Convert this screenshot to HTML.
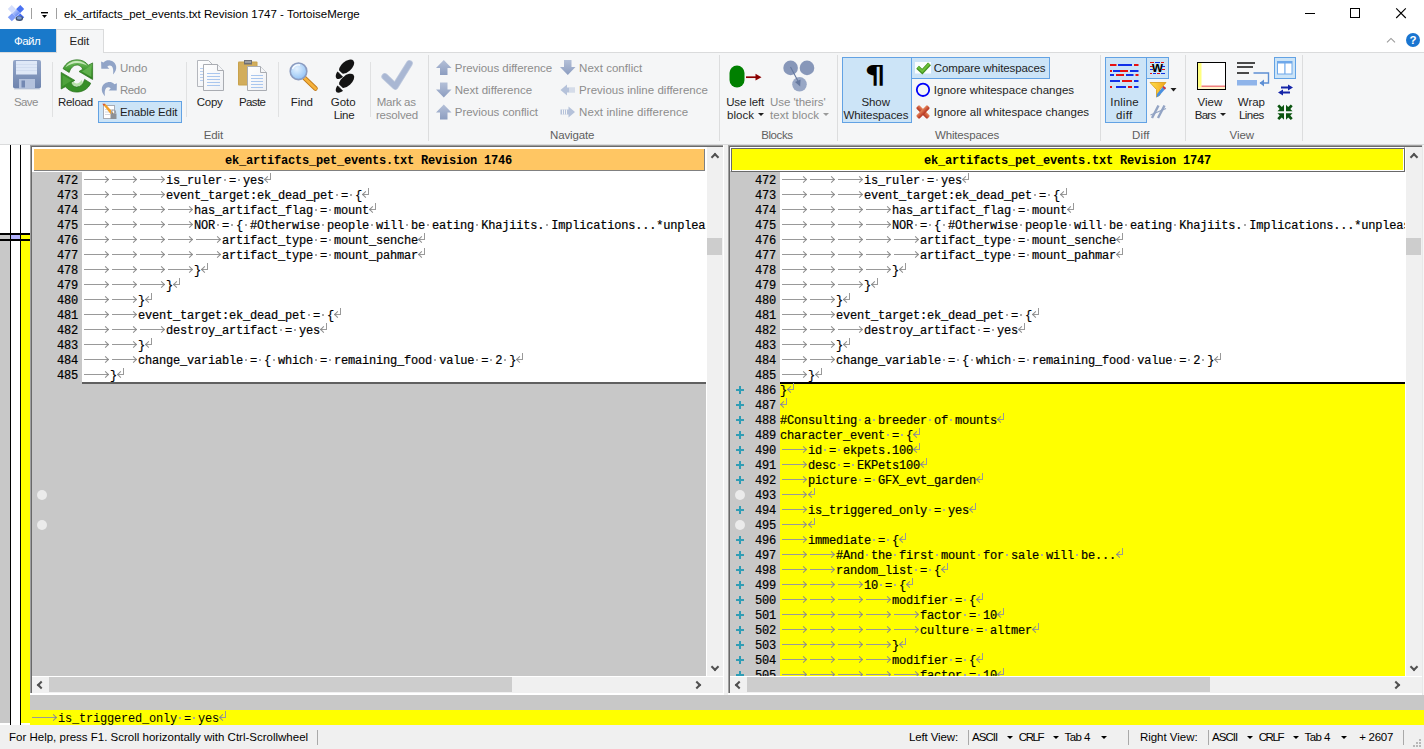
<!DOCTYPE html>
<html lang="en">
<head>
<meta charset="utf-8">
<title>ek_artifacts_pet_events.txt Revision 1747 - TortoiseMerge</title>
<style>
*,*:before,*:after{box-sizing:border-box;margin:0;padding:0}
html,body{width:1424px;height:749px;overflow:hidden;background:#fff}
body{position:relative;font-family:"Liberation Sans",sans-serif;font-size:12px;color:#1e1e1e}
.abs{position:absolute}
i{font-style:normal}
/* ---------- title bar ---------- */
#title{position:absolute;left:0;top:0;width:1424px;height:30px;background:#fff}
#title .txt{position:absolute;left:64px;top:6px;font-size:12px;line-height:16px;color:#000;white-space:nowrap;letter-spacing:-0.1px}
.tsep{position:absolute;top:8px;width:1px;height:11px;background:#a0a0a0}
/* ---------- tabs ---------- */
#tabfile{position:absolute;left:0;top:29px;width:56px;height:23px;background:#1979ca;color:#fff;text-align:center;line-height:23px;font-size:12px}
#tabedit{position:absolute;left:56px;top:29px;width:48px;height:24px;background:#f5f6f7;border:1px solid #dadbdc;border-bottom:none;text-align:center;line-height:22px;font-size:12px;color:#1e1e1e;z-index:2}
/* ---------- ribbon ---------- */
#ribbon{position:absolute;left:0;top:52px;width:1424px;height:93px;background:#f5f6f7;border-top:1px solid #dadbdc;border-bottom:1px solid #dadbdc}
#rb{position:absolute;left:0;top:0;width:0;height:0}
.dda{position:absolute;width:0;height:0;border-left:3px solid transparent;border-right:3px solid transparent;border-top:3px solid #1e1e1e}
.lt.g{color:#5f5f5f}
.lbl{position:absolute;white-space:nowrap;font-size:12px;line-height:13px;text-align:center;color:#1e1e1e;transform:translateX(-50%)}
.lt{position:absolute;white-space:nowrap;font-size:12px;line-height:15px;color:#1e1e1e}
.dis{color:#8d8d8d}
.glbl{position:absolute;top:76px;white-space:nowrap;font-size:12px;line-height:14px;color:#5f5f5f;transform:translateX(-50%)}
.vsep{position:absolute;top:62px;width:1px;height:55px;background:#e0e1e2}
.gsep{position:absolute;top:55px;width:1px;height:86px;background:#dcddde}
.hot{position:absolute;background:#cce4f7;border:1px solid #62a2e4}
/* ---------- locator ---------- */
#loc{position:absolute;left:0;top:145px;width:30px;height:580px;background:#fff}
/* ---------- panes ---------- */
.pane{position:absolute;top:145px;height:550px;background:#fff;overflow:hidden}
.pane .bt1{position:absolute;left:0;top:0;right:0;height:1px;background:#a0a0a0}
.pane .bt2{position:absolute;left:1px;top:1px;right:0;height:1px;background:#696969}
.pane .bl1{position:absolute;left:0;top:0;width:1px;bottom:2px;background:#a0a0a0}
.pane .bl2{position:absolute;left:1px;top:1px;width:1px;bottom:2px;background:#696969}
.hdr{position:absolute;left:2px;top:2px;height:25px;font-family:"Liberation Mono",monospace;font-weight:bold;font-size:12px;letter-spacing:-0.2px;line-height:25px;text-align:center;color:#000;white-space:pre;padding-right:2px}
.hdr.hl{border-top:2px solid #fff;border-left:2px solid #fff;border-top-color:#fff;border-right:1px solid #fff;border-bottom:1px solid #fff;box-shadow:inset -1px -1px 0 #808080}
.hdr.hr{padding-right:0;line-height:25px;padding-top:1px;border-top:1px solid #fff;border-left:1px solid #fff;border-right:1px solid #696969;border-bottom:1px solid #696969;box-shadow:inset 1px 1px 0 #696969,inset -1px -1px 0 #fff}
.code{position:absolute;left:2px;top:27px;height:504px;overflow:hidden;background:#c8c8c8}
.r{position:relative;height:15px;white-space:pre;font-family:"Liberation Mono",monospace;font-size:12px;letter-spacing:-0.2px;line-height:15px;color:#000;-webkit-text-stroke:0.2px #000}
.r .n{position:absolute;left:25px;top:2px;width:21px;text-align:right}
.r .c{position:absolute;left:50px;top:0;right:0;height:15px;padding-top:2px;background:#fff;overflow:hidden}
.r.a .c{background:#ffff00}
.r.first .c:before{content:"";position:absolute;left:0;top:0;right:0;height:2px;background:#000}
.plus{position:absolute;left:6px;top:4px;width:8px;height:8px}
.plus:before{content:"";position:absolute;left:0;top:3px;width:8px;height:2px;background:#2f9db5}
.plus:after{content:"";position:absolute;left:3px;top:0;width:2px;height:8px;background:#2f9db5}
.circ{position:absolute;left:5px;top:3px;width:10px;height:10px;border-radius:50%;background:#ebebeb}
/* whitespace marks */
i.t{display:inline-block;position:relative;width:28px;height:13px;vertical-align:top}
i.t:before{content:"";position:absolute;left:2px;top:5px;width:25px;height:1px;background:#999}
i.t:after{content:"";position:absolute;left:20.8px;top:2.6px;width:5px;height:5px;border-top:1px solid #8a8a8a;border-right:1px solid #8a8a8a;transform:rotate(45deg)}
i.s{display:inline-block;position:relative;width:7px;height:13px;vertical-align:top}
i.s:before{content:"";position:absolute;left:2px;top:5px;width:2px;height:2px;background:#a8a8a8}
i.e{display:inline-block;position:relative;width:7px;height:13px;vertical-align:top}
i.e:before{content:"";position:absolute;left:0;top:-1px;width:7px;height:7px;border-right:1px solid #999;border-bottom:1px solid #999}
i.e:after{content:"";position:absolute;left:1.2px;top:2.6px;width:5px;height:5px;border-left:1px solid #8a8a8a;border-bottom:1px solid #8a8a8a;transform:rotate(45deg)}
/* scrollbars */
.vs{position:absolute;top:2px;height:529px;width:17px;background:#f0f0f0;border-left:1px solid #fff}
.hs{position:absolute;left:2px;top:531px;height:17px;background:#f0f0f0;border-top:1px solid #fff}
.thumb{position:absolute;background:#cdcdcd}
.arr{position:absolute;width:6px;height:6px;border-left:2px solid #505050;border-top:2px solid #505050}
/* bottom line diff bar */
#ldb{position:absolute;left:30px;top:695px;width:1394px;height:30px;background:#c8c8c8}
#ldb .y{position:absolute;left:0;top:15px;width:1394px;height:15px;background:#ffff00;white-space:pre;font-family:"Liberation Mono",monospace;font-size:12px;letter-spacing:-0.2px;line-height:15px;color:#000;padding-top:2px}
/* status bar */
#status{position:absolute;left:0;top:725px;width:1424px;height:24px;background:#f0f0f0;font-size:12px;color:#000}
#sb{position:absolute;left:0;top:0;width:0;height:0}
.lt.st{color:#000}
.lt.tt{color:#000}
.lt.tf{color:#fff}
.lt.te{color:#1e1e1e}
.sp{position:absolute;top:730px;width:1px;height:15px;background:#a9a9a9}
.dds{position:absolute;width:0;height:0;border-left:3.5px solid transparent;border-right:3.5px solid transparent;border-top:3.5px solid #000}
.gd{position:absolute;width:2px;height:2px;background:#b8b8b8}
</style>
</head>
<body>
<!-- TITLE BAR -->
<div id="title">

<div class="tsep" style="left:31px"></div>
<div class="tsep" style="left:56px"></div>
<span class="lt tt" style="left:64.0px;top:6.5px;letter-spacing:0.00px;font-size:11.5px">ek_artifacts_pet_events.txt Revision 1747 - TortoiseMerge</span>

</div>
<div id="tabfile"></div>
<div id="tabedit"></div>
<div class="abs" style="left:0;top:0;z-index:3"><span class="lt tf" style="left:14.1px;top:34.0px;letter-spacing:-0.57px;font-size:11.5px">Файл</span><span class="lt te" style="left:69.6px;top:34.0px;letter-spacing:-0.10px;font-size:11.5px">Edit</span></div>
<!-- RIBBON -->
<div id="ribbon"></div>
<div id="rb">
<div class="vsep" style="left:52px"></div>
<div class="vsep" style="left:186px"></div>
<div class="vsep" style="left:278px"></div>
<div class="vsep" style="left:370px"></div>
<div class="gsep" style="left:428px"></div>
<div class="gsep" style="left:719px"></div>
<div class="gsep" style="left:837px"></div>
<div class="gsep" style="left:1100px"></div>
<div class="gsep" style="left:1185px"></div>
<div class="gsep" style="left:1302px"></div>
<div class="hot" style="left:98px;top:101px;width:84px;height:22px"></div>
<div class="hot" style="left:842px;top:57px;width:70px;height:66px"></div>
<div class="hot" style="left:911px;top:57px;width:139px;height:22px"></div>
<div class="hot" style="left:1105px;top:57px;width:42px;height:66px"></div>
<div class="hot" style="left:1146px;top:57px;width:23px;height:22px"></div>
<div class="hot" style="left:1274px;top:57px;width:22px;height:22px"></div>
<span class="lt dis" style="left:13.9px;top:94.5px;letter-spacing:-0.55px;font-size:11.5px">Save</span>
<span class="lt" style="left:57.9px;top:94.5px;letter-spacing:-0.24px;font-size:11.5px">Reload</span>
<span class="lt dis" style="left:119.9px;top:60.5px;letter-spacing:0.00px;font-size:11.5px">Undo</span>
<span class="lt dis" style="left:119.9px;top:82.5px;letter-spacing:-0.37px;font-size:11.5px">Redo</span>
<span class="lt" style="left:119.9px;top:104.5px;letter-spacing:-0.12px;font-size:11.5px">Enable Edit</span>
<span class="lt" style="left:196.8px;top:94.5px;letter-spacing:-0.26px;font-size:11.5px">Copy</span>
<span class="lt" style="left:238.9px;top:94.5px;letter-spacing:-0.60px;font-size:11.5px">Paste</span>
<span class="lt" style="left:290.7px;top:94.5px;letter-spacing:-0.02px;font-size:11.5px">Find</span>
<span class="lt" style="left:330.8px;top:94.5px;letter-spacing:-0.01px;font-size:11.5px">Goto</span>
<span class="lt" style="left:333.7px;top:107.5px;letter-spacing:-0.29px;font-size:11.5px">Line</span>
<span class="lt dis" style="left:376.8px;top:94.5px;letter-spacing:-0.29px;font-size:11.5px">Mark as</span>
<span class="lt dis" style="left:375.9px;top:107.5px;letter-spacing:-0.17px;font-size:11.5px">resolved</span>
<span class="lt g" style="left:203.8px;top:127.5px;letter-spacing:-0.13px;font-size:11.5px">Edit</span>
<span class="lt dis" style="left:454.8px;top:60.5px;letter-spacing:-0.05px;font-size:11.5px">Previous difference</span>
<span class="lt dis" style="left:454.8px;top:82.5px;letter-spacing:0.01px;font-size:11.5px">Next difference</span>
<span class="lt dis" style="left:454.8px;top:104.5px;letter-spacing:-0.03px;font-size:11.5px">Previous conflict</span>
<span class="lt dis" style="left:579.1px;top:60.5px;letter-spacing:0.04px;font-size:11.5px">Next conflict</span>
<span class="lt dis" style="left:579.1px;top:82.5px;letter-spacing:0.02px;font-size:11.5px">Previous inline difference</span>
<span class="lt dis" style="left:579.1px;top:104.5px;letter-spacing:0.09px;font-size:11.5px">Next inline difference</span>
<span class="lt g" style="left:550.0px;top:127.5px;letter-spacing:-0.15px;font-size:11.5px">Navigate</span>
<span class="lt" style="left:726.2px;top:94.5px;letter-spacing:-0.15px;font-size:11.5px">Use left</span>
<span class="lt" style="left:727.0px;top:107.5px;letter-spacing:0.01px;font-size:11.5px">block</span>
<i class="dda" style="left:757.5px;top:113px;border-top-color:#1e1e1e"></i>
<span class="lt dis" style="left:770.0px;top:94.5px;letter-spacing:-0.05px;font-size:11.5px">Use &#x27;theirs&#x27;</span>
<span class="lt dis" style="left:770.0px;top:107.5px;letter-spacing:0.05px;font-size:11.5px">text block</span>
<i class="dda" style="left:822.5px;top:113px;border-top-color:#9a9a9a"></i>
<span class="lt g" style="left:761.2px;top:127.5px;letter-spacing:-0.40px;font-size:11.5px">Blocks</span>
<span class="lt" style="left:861.4px;top:94.5px;letter-spacing:-0.07px;font-size:11.5px">Show</span>
<span class="lt" style="left:843.4px;top:107.5px;letter-spacing:-0.08px;font-size:11.5px">Whitespaces</span>
<span class="lt" style="left:933.8px;top:60.5px;letter-spacing:-0.12px;font-size:11.5px">Compare whitespaces</span>
<span class="lt" style="left:933.8px;top:82.5px;letter-spacing:0.01px;font-size:11.5px">Ignore whitespace changes</span>
<span class="lt" style="left:933.8px;top:104.5px;letter-spacing:0.02px;font-size:11.5px">Ignore all whitespace changes</span>
<span class="lt g" style="left:935.1px;top:127.5px;letter-spacing:-0.18px;font-size:11.5px">Whitespaces</span>
<span class="lt" style="left:1110.3px;top:94.5px;letter-spacing:0.18px;font-size:11.5px">Inline</span>
<span class="lt" style="left:1116.0px;top:107.5px;letter-spacing:0.37px;font-size:11.5px">diff</span>
<span class="lt g" style="left:1132.1px;top:127.5px;letter-spacing:0.09px;font-size:11.5px">Diff</span>
<span class="lt" style="left:1197.5px;top:94.5px;letter-spacing:0.05px;font-size:11.5px">View</span>
<span class="lt" style="left:1194.8px;top:107.5px;letter-spacing:-0.76px;font-size:11.5px">Bars</span>
<i class="dda" style="left:1219.7px;top:113px;border-top-color:#1e1e1e"></i>
<span class="lt" style="left:1237.8px;top:94.5px;letter-spacing:-0.02px;font-size:11.5px">Wrap</span>
<span class="lt" style="left:1239.0px;top:107.5px;letter-spacing:-0.54px;font-size:11.5px">Lines</span>
<span class="lt g" style="left:1229.5px;top:127.5px;letter-spacing:-0.03px;font-size:11.5px">View</span>
<svg class="abs" style="left:0;top:0" width="1424" height="146" viewBox="0 0 1424 146">
<defs>
<linearGradient id="gSave" x1="0" y1="0" x2="0" y2="1"><stop offset="0" stop-color="#94a6c8"/><stop offset="1" stop-color="#6e84ae"/></linearGradient>
<linearGradient id="gGreen" x1="0" y1="0" x2="0" y2="1"><stop offset="0" stop-color="#7cc46a"/><stop offset="0.5" stop-color="#3f9a30"/><stop offset="1" stop-color="#2b7d1e"/></linearGradient>
<linearGradient id="gNav" x1="0" y1="0" x2="0" y2="1"><stop offset="0" stop-color="#b4c0d8"/><stop offset="1" stop-color="#8c9dc0"/></linearGradient>
<linearGradient id="gPaper" x1="0" y1="0" x2="1" y2="1"><stop offset="0" stop-color="#ffffff"/><stop offset="1" stop-color="#eef0f4"/></linearGradient>
<radialGradient id="gLens" cx="0.4" cy="0.35" r="0.7"><stop offset="0" stop-color="#e4f2ff"/><stop offset="1" stop-color="#8fc0f4"/></radialGradient>
<linearGradient id="gApp1" x1="0" y1="0" x2="1" y2="1"><stop offset="0" stop-color="#dfe8ff"/><stop offset="1" stop-color="#3a68f0"/></linearGradient>
<linearGradient id="gApp2" x1="1" y1="0" x2="0" y2="1"><stop offset="0" stop-color="#2f5cf0"/><stop offset="1" stop-color="#9db8ff"/></linearGradient>
<linearGradient id="gFun" x1="0" y1="0" x2="1" y2="0"><stop offset="0" stop-color="#ffe24a"/><stop offset="1" stop-color="#f2a21c"/></linearGradient>
</defs>

<!-- ===== title bar ===== -->
<g id="appicon">
<path d="M11.7 5 L16 9.3 L12 13.3 L7.8 9 Z" fill="#d5dffc"/>
<path d="M20.3 5 L24.2 9 L20 13.3 L16 9.3 Z" fill="#4a72f2"/>
<path d="M16 9.3 L20 13.3 L16 17.3 L12 13.3 Z" fill="url(#gApp1)"/>
<path d="M12 13.3 L16 17.3 L11.8 21.3 L7.8 17.3 Z" fill="#7f9df8"/>
<path d="M20 13.3 L24.2 17.3 L20.2 21 L16 17.3 Z" fill="#4068ee"/>
<path d="M16 9.3 L12 13.3 M20 13.3 L16 17.3" stroke="#e6ecff" stroke-width="0.6"/>
<ellipse cx="19.3" cy="18.6" rx="3.7" ry="2.5" fill="#3f4f6c"/>
<ellipse cx="19.3" cy="17.9" rx="2.5" ry="1.6" fill="#7a9ad0"/>
</g>
<rect x="41" y="12" width="7" height="1.4" fill="#000"/>
<path d="M42 15 L47 15 L44.5 18 Z" fill="#000"/>
<!-- window controls -->
<rect x="1305" y="13" width="10" height="1" fill="#000"/>
<rect x="1350.5" y="8.5" width="9" height="9" fill="none" stroke="#000" stroke-width="1"/>
<path d="M1396.2 8.4 L1405.8 18 M1405.8 8.4 L1396.2 18" stroke="#000" stroke-width="1.1" fill="none"/>
<path d="M1387 42.3 L1391 38.4 L1395 42.3" stroke="#9a9a9a" stroke-width="1.1" fill="none"/>
<circle cx="1413" cy="40" r="7" fill="#1a75d0"/>
<text x="1413" y="44.2" font-family="Liberation Sans, sans-serif" font-size="11.5" font-weight="bold" fill="#fff" text-anchor="middle">?</text>

<!-- ===== Save ===== -->
<g>
<rect x="13" y="60" width="28" height="28.5" rx="2" fill="url(#gSave)"/>
<rect x="16" y="61" width="21" height="13.5" fill="#dfe8f7"/>
<path d="M16 64.5H37M16 67.5H37M16 70.5H37" stroke="#d2ddf0" stroke-width="1"/>
<rect x="19" y="79" width="16" height="9.5" fill="#b3c1dc"/>
<rect x="21.5" y="80.5" width="3.5" height="7" fill="#7388b2"/>
<rect x="14" y="89" width="26" height="1" fill="#dfe3ea"/>
</g>

<!-- ===== Reload ===== -->
<g transform="translate(60.5 59.6)">
<path d="M2.6 9.1 C5 3.5 10.5 0.2 16.7 0.2 C21 0.2 25 2 27.9 5.6 L32.1 3.3 L32.1 19.9 L18.5 11.9 L22.3 9.6 C21 7 19 5.4 16.7 5.4 C13 5.4 10 8.5 8.7 12.9 Z" fill="url(#gGreen)" stroke="#256f18" stroke-width="0.7" stroke-linejoin="round"/>
<path d="M5 7.6 C8 3.3 12 1.5 16.7 1.5 C20.5 1.5 24 3 26.6 6 C23 4 20 3.2 16.7 3.3 C12.5 3.4 8.5 5 5 7.6 Z" fill="#d8f0cc" opacity="0.85"/>
<path d="M30.8 6 L30.8 17.3 L21.5 11.8 Z" fill="#6cba58" opacity="0.75"/>
<g transform="rotate(180 16.4 16.35)">
<path d="M2.6 9.1 C5 3.5 10.5 0.2 16.7 0.2 C21 0.2 25 2 27.9 5.6 L32.1 3.3 L32.1 19.9 L18.5 11.9 L22.3 9.6 C21 7 19 5.4 16.7 5.4 C13 5.4 10 8.5 8.7 12.9 Z" fill="#378f28" stroke="#256f18" stroke-width="0.7" stroke-linejoin="round"/>
<path d="M10.3 9.6 C11.8 7.2 14 6.2 16.7 6.2 C19 6.2 20.8 7.5 21.8 9.3 L19.6 10.6 C18.8 9.5 17.8 8.9 16.7 8.9 C14.6 8.9 12.9 10.2 11.8 12.3 Z" fill="#a6dc94" opacity="0.8"/>
<path d="M30.8 6 L30.8 17.3 L21.5 11.8 Z" fill="#58aa44" opacity="0.7"/>
</g>
</g>

<!-- ===== Undo / Redo ===== -->
<g fill="#91a4c7" stroke="none">
<path d="M101.1 61.4 L101.3 68.7 L109.4 68.7 L107.3 66.7 C108.5 65.4 110.5 65.1 111.8 66.3 C113.3 67.9 113.6 71 113 74.5 C115.5 72 116.7 69 116.1 66 C115 61.5 110 59.4 106 60.7 C105 61.1 104.2 61.7 103.5 62.4 Z"/>
<path d="M116.9 83.2 L116.7 90.5 L108.6 90.5 L110.7 88.5 C109.5 87.2 107.5 86.9 106.2 88.1 C104.7 89.7 104.4 92.8 105 96.3 C102.5 93.8 101.3 90.8 101.9 87.8 C103 83.3 108 81.2 112 82.5 C113 82.9 113.8 83.5 114.5 84.2 Z"/>
</g>

<!-- ===== Enable Edit icon ===== -->
<g>
<rect x="103.5" y="105.5" width="11" height="13" fill="#fff" stroke="#a8acb4" stroke-width="1"/>
<path d="M105 109.5H113M105 112H113M105 114.5H110" stroke="#d5d8de" stroke-width="1"/>
<path d="M103 104.5 L105.5 104 L113 112.5 L111 114.5 Z" fill="#f2a12a"/>
<path d="M102.3 103.8 L105.2 103.8 L104 106 Z" fill="#d94a2a"/>
<path d="M111 114.5 L113 112.5 L114 115.5 Z" fill="#6a5a48"/>
<rect x="110.5" y="113.5" width="6" height="5.5" fill="#8d9196"/>
<path d="M111.5 113.5 V112 A2 2 0 0 1 115.5 112 V113.5" stroke="#9b9fa6" stroke-width="1.2" fill="none"/>
</g>

<!-- ===== Copy ===== -->
<g>
<path d="M197.5 60.5 H208.5 L213.5 65.5 V86.5 H197.5 Z" fill="url(#gPaper)" stroke="#b4b7bd" stroke-width="1"/>
<path d="M200 68.5H205M200 71.5H205M200 74.5H205M200 77.5H205M200 80.5H205" stroke="#b8cff0" stroke-width="1"/>
<path d="M203.5 64.5 H217.5 L223.5 70.5 V90.5 H203.5 Z" fill="url(#gPaper)" stroke="#a9acb2" stroke-width="1"/>
<path d="M217.5 64.5 V70.5 H223.5" fill="#f4f5f7" stroke="#a9acb2" stroke-width="1"/>
<path d="M207 73.5H220M207 76.5H220M207 79.5H220M207 82.5H220M207 85.5H220" stroke="#a9c6ee" stroke-width="1"/>
</g>

<!-- ===== Paste ===== -->
<g>
<rect x="238" y="61.5" width="19.5" height="24" rx="1" fill="#c9a24c"/>
<rect x="239" y="62.5" width="17.5" height="22" fill="#d2ad5c"/>
<rect x="244" y="60" width="8" height="4.5" fill="#6f7075"/>
<rect x="245" y="61.5" width="6" height="1" fill="#c9cacc"/>
<path d="M247.5 66.5 H260.5 L266.5 72.5 V90.5 H247.5 Z" fill="url(#gPaper)" stroke="#a9acb2" stroke-width="1"/>
<path d="M260.5 66.5 V72.5 H266.5" fill="#f4f5f7" stroke="#a9acb2" stroke-width="1"/>
<path d="M251 75.5H263M251 78.5H263M251 81.5H263M251 84.5H263M251 87.5H263" stroke="#a9c6ee" stroke-width="1"/>
</g>

<!-- ===== Find ===== -->
<g>
<path d="M304.5 78 L315.5 88.5" stroke="#c07a1a" stroke-width="4.6" stroke-linecap="round"/>
<path d="M304.5 78 L315.5 88.5" stroke="#f6b23c" stroke-width="3" stroke-linecap="round"/>
<circle cx="298.5" cy="71.3" r="8.3" fill="url(#gLens)" stroke="#8c9cc0" stroke-width="1.6"/>
<path d="M292.5 69 A6.5 6.5 0 0 1 300 65" stroke="#fff" stroke-width="1.4" fill="none" opacity="0.9"/>
</g>

<!-- ===== Goto Line (footprints) ===== -->
<g fill="#141414">
<ellipse cx="346.6" cy="66.6" rx="9.1" ry="5.1" transform="rotate(-41 346.6 66.6)"/>
<path d="M337.6 71.6 L343 76.8 C341.5 78.6 338.3 79.6 336.6 78.4 C335 77.2 335.8 73.8 337.6 71.6 Z"/>
<ellipse cx="346.6" cy="80.8" rx="9.1" ry="5.1" transform="rotate(-41 346.6 80.8)"/>
<path d="M337.6 85.6 L343 90.8 C341.5 92.4 338.3 93.2 336.6 92.2 C335 91 335.8 87.8 337.6 85.6 Z"/>
</g>
<g stroke="#f5f6f7" stroke-width="1.2"><path d="M337.8 70 L344.2 76.2"/><path d="M337.8 84 L344.2 90.2"/></g>

<!-- ===== Mark as resolved ===== -->
<path d="M384.8 76.5 L395.2 86.4 L409.4 63.5" stroke="#bdc8dd" stroke-width="6.8" fill="none" stroke-linecap="round" stroke-linejoin="round"/>
<path d="M384.8 76.5 L395.2 86.4 L409.4 63.5" stroke="#a9b7d3" stroke-width="5.2" fill="none" stroke-linecap="round" stroke-linejoin="round"/>

<!-- ===== Navigate arrows ===== -->
<g fill="url(#gNav)">
<path id="upA" d="M443.8 60 L451.5 68 H447.5 V75 H440 V68 H436 Z"/>
<path d="M443.8 97.5 L451.5 89.5 H447.5 V82.5 H440 V89.5 H436 Z"/>
<path d="M443.8 104.5 L451.5 112.5 H447.5 V119.5 H440 V112.5 H436 Z"/>
<path d="M567.8 75 L575.5 67 H571.5 V60 H564 V67 H560 Z"/>
</g>
<g fill="#b5c2da">
<path d="M560.5 90 L567 84.5 V87.5 H575 V92.5 H567 V95.5 Z"/>
<path d="M575 112 L568.5 106.5 V109.5 H560.5 V114.5 H568.5 V117.5 Z"/>
</g>
<g fill="#f5f6f7">
<rect x="569.5" y="87.5" width="1" height="5"/><rect x="571.5" y="87.5" width="1" height="5"/><rect x="573.5" y="87.5" width="1" height="5"/>
<rect x="562" y="109.5" width="1" height="5"/><rect x="564" y="109.5" width="1" height="5"/><rect x="566" y="109.5" width="1" height="5"/>
</g>

<!-- ===== Use left block ===== -->
<rect x="729.5" y="65.5" width="15" height="22" rx="7.5" fill="#008000"/>
<path d="M746 77.2 H757" stroke="#8b0000" stroke-width="1.7"/>
<path d="M755.5 73.8 L761.5 77.2 L755.5 80.6 Z" fill="#8b0000"/>

<!-- ===== Use theirs ===== -->
<g fill="#8797b9">
<circle cx="790.6" cy="67.9" r="7.3"/><circle cx="807" cy="67.9" r="7.3"/><circle cx="799.5" cy="84.3" r="7.3" fill="#98a7c5"/>
</g>
<path d="M790.5 67 L798.5 82" stroke="#66799f" stroke-width="1.1"/>
<path d="M800.2 86.5 L795 82 L800.6 79.5 Z" fill="#66799f"/>

<!-- ===== Show whitespaces (pilcrow drawn as shape-free text) ===== -->
<text x="0" y="83" transform="translate(875.2 0) scale(1.32 1)" font-family="DejaVu Sans, Liberation Sans, sans-serif" font-size="24.8" font-weight="bold" fill="#000" text-anchor="middle">¶</text>

<!-- ===== whitespace option icons ===== -->
<rect x="915" y="62" width="16" height="11.5" fill="#fff" opacity="0.9"/>
<path d="M917.6 67.3 L922.3 71.7 L929.5 63.8" stroke="#3f8f1e" stroke-width="4" fill="none" stroke-linejoin="miter"/>
<path d="M917.8 67.1 L922.3 71.2 L929.3 63.8" stroke="#6cc03a" stroke-width="2.2" fill="none" stroke-linejoin="miter"/>
<circle cx="923" cy="89.8" r="6.2" fill="none" stroke="#0000fa" stroke-width="1.8"/>
<defs><linearGradient id="gX" x1="0" y1="0" x2="0" y2="1"><stop offset="0" stop-color="#e58358"/><stop offset="1" stop-color="#b43322"/></linearGradient></defs>
<g fill="url(#gX)"><rect x="915.2" y="109.8" width="15.6" height="4.4" rx="1.2" transform="rotate(45 923 112)"/><rect x="915.2" y="109.8" width="15.6" height="4.4" rx="1.2" transform="rotate(-45 923 112)"/></g>

<!-- ===== Inline diff ===== -->
<g>
<g fill="#e81010">
<rect x="1110" y="64" width="6.5" height="2"/><rect x="1134" y="64" width="4.5" height="2"/>
<rect x="1110" y="70" width="2" height="2"/><rect x="1120" y="70" width="8" height="2"/>
<rect x="1116" y="74" width="8" height="2"/><rect x="1135.5" y="74" width="3" height="2"/>
<rect x="1122" y="80" width="10" height="2"/>
<rect x="1110" y="86" width="2" height="2"/><rect x="1128" y="86" width="4" height="2"/>
</g>
<g fill="#1030e8">
<rect x="1118" y="64" width="14" height="2"/>
<rect x="1113" y="70" width="7" height="2"/><rect x="1130" y="70" width="8.5" height="2"/>
<rect x="1110" y="74" width="4" height="2"/><rect x="1126" y="74" width="7.5" height="2"/>
<rect x="1110" y="80" width="10" height="2"/><rect x="1134" y="80" width="4.5" height="2"/>
<rect x="1116" y="86" width="10" height="2"/><rect x="1134" y="86" width="4.5" height="2"/>
</g>
</g>
<!-- word-wise small icon -->
<g>
<g fill="#e81010"><rect x="1150" y="62" width="4" height="1"/><rect x="1161" y="62" width="3" height="1"/><rect x="1150" y="73" width="2" height="1"/><rect x="1157" y="73" width="3" height="1"/><rect x="1150" y="66" width="3" height="1"/><rect x="1162" y="69" width="3" height="1"/></g>
<g fill="#1030e8"><rect x="1155" y="62" width="5" height="1"/><rect x="1153" y="73" width="3" height="1"/><rect x="1161" y="73" width="4" height="1"/><rect x="1150" y="69" width="3" height="1"/><rect x="1162" y="66" width="3" height="1"/></g>
<text x="1157.5" y="72" font-family="Liberation Sans, sans-serif" font-size="14" font-weight="bold" fill="#000" text-anchor="middle">w</text>
</g>
<!-- funnel -->
<path d="M1150 82.5 H1166 L1160 89.5 V95 L1156.5 97 V89.5 Z" fill="url(#gFun)" stroke="#d89a18" stroke-width="0.8"/>
<path d="M1163.5 86 L1166 88 L1159 96 L1156.5 97.5 L1157 94 Z" fill="#4a90e0"/>
<path d="M1163.5 86 L1166 88 L1165 89.5 L1162.5 87.5 Z" fill="#e03030"/>
<path d="M1170.5 88 H1176.5 L1173.5 91.5 Z" fill="#1e1e1e"/>
<!-- third -->
<path d="M1152 118 L1158.5 105.5 M1158 118 L1164.5 105.5" stroke="#93a4c4" stroke-width="2.4" fill="none"/><path d="M1150.5 115 L1166 108.5" stroke="#93a4c4" stroke-width="1.2" fill="none"/>

<!-- ===== View Bars ===== -->
<rect x="1197.5" y="62.5" width="28" height="27" fill="#fff" stroke="#000" stroke-width="1"/>
<rect x="1198" y="63" width="3.5" height="26" fill="#ffff80"/>
<rect x="1201.5" y="85.5" width="23.5" height="1.7" fill="#f08080"/>
<rect x="1198" y="87.2" width="27" height="1.8" fill="#fff4c8"/>

<!-- ===== Wrap Lines ===== -->
<path d="M1237 63H1255M1237 67H1253M1237 73H1249" stroke="#111" stroke-width="1.6"/>
<rect x="1237" y="80" width="20" height="5.5" fill="#8fb4ea"/>
<path d="M1253.5 73 H1268.5 V83 H1260" stroke="#5d8fd4" stroke-width="1.4" fill="none"/>
<path d="M1259.5 83 L1264 79.5 V86.5 Z" fill="#5d8fd4"/>

<!-- ===== small view icons ===== -->
<rect x="1277.5" y="61.5" width="14.5" height="12.5" fill="#fff" stroke="#6ea8ea" stroke-width="1"/>
<rect x="1277.5" y="61.5" width="14.5" height="2" fill="#6ea8ea"/>
<rect x="1284.3" y="62" width="1.2" height="12" fill="#6ea8ea"/>
<g fill="#1424a8">
<path d="M1281 86.5 H1288 V84.5 L1293 87.5 L1288 90.5 V88.5 H1281 Z"/>
<path d="M1290 91.5 H1283 V89.5 L1278 92.5 L1283 95.5 V93.5 H1290 Z"/>
</g>
<g fill="#0b5410">
<path d="M1277.3 106.3 L1279.2 104.4 L1281.8 107 L1284 104.8 V111.3 H1277.5 L1279.7 109.1 Z"/>
<path d="M1292.7 106.3 L1290.8 104.4 L1288.2 107 L1286 104.8 V111.3 H1292.5 L1290.3 109.1 Z"/>
<path d="M1277.3 118.2 L1279.2 120.1 L1281.8 117.5 L1284 119.7 V113.2 H1277.5 L1279.7 115.4 Z"/>
<path d="M1292.7 118.2 L1290.8 120.1 L1288.2 117.5 L1286 119.7 V113.2 H1292.5 L1290.3 115.4 Z"/>
</g>
</svg>

</div>
<!-- LOCATOR BAR -->
<div id="loc">
<div class="abs" style="left:0;top:90px;width:10px;height:491px;background:#c8c8c8"></div>
<div class="abs" style="left:11px;top:90px;width:9px;height:4px;background:#b4b4ff"></div>
<div class="abs" style="left:21px;top:90px;width:9px;height:491px;background:#ffff00"></div>
<div class="abs" style="left:0;top:578px;width:30px;height:2px;background:#fff"></div>
<div class="abs" style="left:10px;top:0;width:1px;height:581px;background:#000"></div>
<div class="abs" style="left:20px;top:0;width:1px;height:581px;background:#000"></div>
<div class="abs" style="left:0;top:88px;width:30px;height:2px;background:#000"></div>
<div class="abs" style="left:0;top:94px;width:30px;height:2px;background:#000"></div>
</div>
<!-- LEFT PANE -->
<div class="pane" id="lp" style="left:30px;width:693px">
<div class="bt1"></div><div class="bt2"></div><div class="bl1"></div><div class="bl2"></div>
<div class="hdr hl" style="width:674px;background:#ffc663">ek_artifacts_pet_events.txt Revision 1746</div>
<div class="code" style="width:674px">
<div class="r"><span class="n">472</span><span class="c"><i class="t"></i><i class="t"></i><i class="t"></i>is_ruler<i class="s"></i>=<i class="s"></i>yes<i class="e"></i></span></div>
<div class="r"><span class="n">473</span><span class="c"><i class="t"></i><i class="t"></i><i class="t"></i>event_target:ek_dead_pet<i class="s"></i>=<i class="s"></i>{<i class="e"></i></span></div>
<div class="r"><span class="n">474</span><span class="c"><i class="t"></i><i class="t"></i><i class="t"></i><i class="t"></i>has_artifact_flag<i class="s"></i>=<i class="s"></i>mount<i class="e"></i></span></div>
<div class="r"><span class="n">475</span><span class="c"><i class="t"></i><i class="t"></i><i class="t"></i><i class="t"></i>NOR<i class="s"></i>=<i class="s"></i>{<i class="s"></i>#Otherwise<i class="s"></i>people<i class="s"></i>will<i class="s"></i>be<i class="s"></i>eating<i class="s"></i>Khajiits.<i class="s"></i>Implications...*unpleasant*<i class="e"></i></span></div>
<div class="r"><span class="n">476</span><span class="c"><i class="t"></i><i class="t"></i><i class="t"></i><i class="t"></i><i class="t"></i>artifact_type<i class="s"></i>=<i class="s"></i>mount_senche<i class="e"></i></span></div>
<div class="r"><span class="n">477</span><span class="c"><i class="t"></i><i class="t"></i><i class="t"></i><i class="t"></i><i class="t"></i>artifact_type<i class="s"></i>=<i class="s"></i>mount_pahmar<i class="e"></i></span></div>
<div class="r"><span class="n">478</span><span class="c"><i class="t"></i><i class="t"></i><i class="t"></i><i class="t"></i>}<i class="e"></i></span></div>
<div class="r"><span class="n">479</span><span class="c"><i class="t"></i><i class="t"></i><i class="t"></i>}<i class="e"></i></span></div>
<div class="r"><span class="n">480</span><span class="c"><i class="t"></i><i class="t"></i>}<i class="e"></i></span></div>
<div class="r"><span class="n">481</span><span class="c"><i class="t"></i><i class="t"></i>event_target:ek_dead_pet<i class="s"></i>=<i class="s"></i>{<i class="e"></i></span></div>
<div class="r"><span class="n">482</span><span class="c"><i class="t"></i><i class="t"></i><i class="t"></i>destroy_artifact<i class="s"></i>=<i class="s"></i>yes<i class="e"></i></span></div>
<div class="r"><span class="n">483</span><span class="c"><i class="t"></i><i class="t"></i>}<i class="e"></i></span></div>
<div class="r"><span class="n">484</span><span class="c"><i class="t"></i><i class="t"></i>change_variable<i class="s"></i>=<i class="s"></i>{<i class="s"></i>which<i class="s"></i>=<i class="s"></i>remaining_food<i class="s"></i>value<i class="s"></i>=<i class="s"></i>2<i class="s"></i>}<i class="e"></i></span></div>
<div class="r"><span class="n">485</span><span class="c"><i class="t"></i>}<i class="e"></i></span></div>
<div class="abs" style="left:50px;top:210px;right:0;height:2px;background:#606060"></div>
<b class="circ" style="top:318px;left:5px"></b>
<b class="circ" style="top:348px;left:5px"></b>
</div>
<div class="vs" style="left:676px">
<div class="arr" style="left:4.5px;top:7px;transform:rotate(45deg)"></div>
<div class="thumb" style="left:0;top:91px;width:15px;height:17px"></div>
<div class="arr" style="left:4.5px;top:516.5px;transform:rotate(225deg)"></div>
</div>
<div class="hs" style="width:691px">
<div class="arr" style="left:6.4px;top:4.5px;transform:rotate(-45deg)"></div>
<div class="thumb" style="left:17px;top:0;width:463px;height:15px"></div>
<div class="arr" style="left:662px;top:4.5px;transform:rotate(135deg)"></div>
</div>
</div>
<div class="abs" style="left:724px;top:145px;width:4px;height:550px;background:#f0f0f0"></div>
<!-- RIGHT PANE -->
<div class="pane" id="rp" style="left:728px;width:694px">
<div class="bt1"></div><div class="bt2"></div><div class="bl1"></div><div class="bl2"></div>
<div class="hdr hr" style="width:675px;background:#ffff00">ek_artifacts_pet_events.txt Revision 1747</div>
<div class="code" style="width:675px">
<div class="r"><span class="n">472</span><span class="c"><i class="t"></i><i class="t"></i><i class="t"></i>is_ruler<i class="s"></i>=<i class="s"></i>yes<i class="e"></i></span></div>
<div class="r"><span class="n">473</span><span class="c"><i class="t"></i><i class="t"></i><i class="t"></i>event_target:ek_dead_pet<i class="s"></i>=<i class="s"></i>{<i class="e"></i></span></div>
<div class="r"><span class="n">474</span><span class="c"><i class="t"></i><i class="t"></i><i class="t"></i><i class="t"></i>has_artifact_flag<i class="s"></i>=<i class="s"></i>mount<i class="e"></i></span></div>
<div class="r"><span class="n">475</span><span class="c"><i class="t"></i><i class="t"></i><i class="t"></i><i class="t"></i>NOR<i class="s"></i>=<i class="s"></i>{<i class="s"></i>#Otherwise<i class="s"></i>people<i class="s"></i>will<i class="s"></i>be<i class="s"></i>eating<i class="s"></i>Khajiits.<i class="s"></i>Implications...*unpleasant*<i class="e"></i></span></div>
<div class="r"><span class="n">476</span><span class="c"><i class="t"></i><i class="t"></i><i class="t"></i><i class="t"></i><i class="t"></i>artifact_type<i class="s"></i>=<i class="s"></i>mount_senche<i class="e"></i></span></div>
<div class="r"><span class="n">477</span><span class="c"><i class="t"></i><i class="t"></i><i class="t"></i><i class="t"></i><i class="t"></i>artifact_type<i class="s"></i>=<i class="s"></i>mount_pahmar<i class="e"></i></span></div>
<div class="r"><span class="n">478</span><span class="c"><i class="t"></i><i class="t"></i><i class="t"></i><i class="t"></i>}<i class="e"></i></span></div>
<div class="r"><span class="n">479</span><span class="c"><i class="t"></i><i class="t"></i><i class="t"></i>}<i class="e"></i></span></div>
<div class="r"><span class="n">480</span><span class="c"><i class="t"></i><i class="t"></i>}<i class="e"></i></span></div>
<div class="r"><span class="n">481</span><span class="c"><i class="t"></i><i class="t"></i>event_target:ek_dead_pet<i class="s"></i>=<i class="s"></i>{<i class="e"></i></span></div>
<div class="r"><span class="n">482</span><span class="c"><i class="t"></i><i class="t"></i><i class="t"></i>destroy_artifact<i class="s"></i>=<i class="s"></i>yes<i class="e"></i></span></div>
<div class="r"><span class="n">483</span><span class="c"><i class="t"></i><i class="t"></i>}<i class="e"></i></span></div>
<div class="r"><span class="n">484</span><span class="c"><i class="t"></i><i class="t"></i>change_variable<i class="s"></i>=<i class="s"></i>{<i class="s"></i>which<i class="s"></i>=<i class="s"></i>remaining_food<i class="s"></i>value<i class="s"></i>=<i class="s"></i>2<i class="s"></i>}<i class="e"></i></span></div>
<div class="r"><span class="n">485</span><span class="c"><i class="t"></i>}<i class="e"></i></span></div>
<div class="r a first"><b class="plus"></b><span class="n">486</span><span class="c">}<i class="e"></i></span></div>
<div class="r a"><b class="plus"></b><span class="n">487</span><span class="c"><i class="e"></i></span></div>
<div class="r a"><b class="plus"></b><span class="n">488</span><span class="c">#Consulting<i class="s"></i>a<i class="s"></i>breeder<i class="s"></i>of<i class="s"></i>mounts<i class="e"></i></span></div>
<div class="r a"><b class="plus"></b><span class="n">489</span><span class="c">character_event<i class="s"></i>=<i class="s"></i>{<i class="e"></i></span></div>
<div class="r a"><b class="plus"></b><span class="n">490</span><span class="c"><i class="t"></i>id<i class="s"></i>=<i class="s"></i>ekpets.100<i class="e"></i></span></div>
<div class="r a"><b class="plus"></b><span class="n">491</span><span class="c"><i class="t"></i>desc<i class="s"></i>=<i class="s"></i>EKPets100<i class="e"></i></span></div>
<div class="r a"><b class="plus"></b><span class="n">492</span><span class="c"><i class="t"></i>picture<i class="s"></i>=<i class="s"></i>GFX_evt_garden<i class="e"></i></span></div>
<div class="r a"><b class="circ"></b><span class="n">493</span><span class="c"><i class="t"></i><i class="e"></i></span></div>
<div class="r a"><b class="plus"></b><span class="n">494</span><span class="c"><i class="t"></i>is_triggered_only<i class="s"></i>=<i class="s"></i>yes<i class="e"></i></span></div>
<div class="r a"><b class="circ"></b><span class="n">495</span><span class="c"><i class="t"></i><i class="e"></i></span></div>
<div class="r a"><b class="plus"></b><span class="n">496</span><span class="c"><i class="t"></i>immediate<i class="s"></i>=<i class="s"></i>{<i class="e"></i></span></div>
<div class="r a"><b class="plus"></b><span class="n">497</span><span class="c"><i class="t"></i><i class="t"></i>#And<i class="s"></i>the<i class="s"></i>first<i class="s"></i>mount<i class="s"></i>for<i class="s"></i>sale<i class="s"></i>will<i class="s"></i>be...<i class="e"></i></span></div>
<div class="r a"><b class="plus"></b><span class="n">498</span><span class="c"><i class="t"></i><i class="t"></i>random_list<i class="s"></i>=<i class="s"></i>{<i class="e"></i></span></div>
<div class="r a"><b class="plus"></b><span class="n">499</span><span class="c"><i class="t"></i><i class="t"></i><i class="t"></i>10<i class="s"></i>=<i class="s"></i>{<i class="e"></i></span></div>
<div class="r a"><b class="plus"></b><span class="n">500</span><span class="c"><i class="t"></i><i class="t"></i><i class="t"></i><i class="t"></i>modifier<i class="s"></i>=<i class="s"></i>{<i class="e"></i></span></div>
<div class="r a"><b class="plus"></b><span class="n">501</span><span class="c"><i class="t"></i><i class="t"></i><i class="t"></i><i class="t"></i><i class="t"></i>factor<i class="s"></i>=<i class="s"></i>10<i class="e"></i></span></div>
<div class="r a"><b class="plus"></b><span class="n">502</span><span class="c"><i class="t"></i><i class="t"></i><i class="t"></i><i class="t"></i><i class="t"></i>culture<i class="s"></i>=<i class="s"></i>altmer<i class="e"></i></span></div>
<div class="r a"><b class="plus"></b><span class="n">503</span><span class="c"><i class="t"></i><i class="t"></i><i class="t"></i><i class="t"></i>}<i class="e"></i></span></div>
<div class="r a"><b class="plus"></b><span class="n">504</span><span class="c"><i class="t"></i><i class="t"></i><i class="t"></i><i class="t"></i>modifier<i class="s"></i>=<i class="s"></i>{<i class="e"></i></span></div>
<div class="r a"><b class="plus"></b><span class="n">505</span><span class="c"><i class="t"></i><i class="t"></i><i class="t"></i><i class="t"></i><i class="t"></i>factor<i class="s"></i>=<i class="s"></i>10<i class="e"></i></span></div>
</div>
<div class="vs" style="left:677px">
<div class="arr" style="left:4.5px;top:7px;transform:rotate(45deg)"></div>
<div class="thumb" style="left:0;top:91px;width:15px;height:17px"></div>
<div class="arr" style="left:4.5px;top:516.5px;transform:rotate(225deg)"></div>
</div>
<div class="hs" style="width:692px">
<div class="arr" style="left:6.4px;top:4.5px;transform:rotate(-45deg)"></div>
<div class="thumb" style="left:17px;top:0;width:463px;height:15px"></div>
<div class="arr" style="left:663.3px;top:4.5px;transform:rotate(135deg)"></div>
</div>
</div>
<div class="abs" style="left:1422px;top:145px;width:1px;height:550px;background:#e8e8e8"></div><div class="abs" style="left:1423px;top:145px;width:1px;height:550px;background:#f7f7f7"></div>
<!-- LINE DIFF BAR -->
<div id="ldb"><div class="y"><i class="t"></i>is_triggered_only<i class="s"></i>=<i class="s"></i>yes<i class="e"></i></div></div>
<!-- STATUS BAR -->
<div id="status"></div>
<div id="sb">
<span class="lt st" style="left:9.0px;top:730.0px;letter-spacing:0.00px;font-size:11.5px">For Help, press F1. Scroll horizontally with Ctrl-Scrollwheel</span>
<div class="sp" style="left:317px"></div>
<span class="lt st" style="left:908.9px;top:730.0px;letter-spacing:-0.12px;font-size:11.5px">Left View:</span>
<div class="sp" style="left:968px"></div>
<span class="lt st" style="left:971.9px;top:730.0px;letter-spacing:-0.91px;font-size:11.5px">ASCII</span>
<i class="dds" style="left:1006.5px;top:736px"></i>
<span class="lt st" style="left:1018.8px;top:730.0px;letter-spacing:-1.43px;font-size:11.5px">CRLF</span>
<i class="dds" style="left:1052.5px;top:736px"></i>
<span class="lt st" style="left:1064.5px;top:730.0px;letter-spacing:-0.53px;font-size:11.5px">Tab 4</span>
<i class="dds" style="left:1100.5px;top:736px"></i>
<div class="sp" style="left:1128px"></div>
<span class="lt st" style="left:1139.9px;top:730.0px;letter-spacing:-0.02px;font-size:11.5px">Right View:</span>
<div class="sp" style="left:1208px"></div>
<span class="lt st" style="left:1211.9px;top:730.0px;letter-spacing:-0.91px;font-size:11.5px">ASCII</span>
<i class="dds" style="left:1246.5px;top:736px"></i>
<span class="lt st" style="left:1258.7px;top:730.0px;letter-spacing:-1.41px;font-size:11.5px">CRLF</span>
<i class="dds" style="left:1292.5px;top:736px"></i>
<span class="lt st" style="left:1304.5px;top:730.0px;letter-spacing:-0.53px;font-size:11.5px">Tab 4</span>
<i class="dds" style="left:1340.5px;top:736px"></i>
<span class="lt st" style="left:1359.2px;top:730.0px;letter-spacing:-0.28px;font-size:11.5px">+ 2607</span>
<div class="sp" style="left:1403px"></div>
<i class="gd" style="left:1419px;top:739px"></i><i class="gd" style="left:1416px;top:742px"></i><i class="gd" style="left:1419px;top:742px"></i><i class="gd" style="left:1413px;top:745px"></i><i class="gd" style="left:1416px;top:745px"></i><i class="gd" style="left:1419px;top:745px"></i>
</div>
</body>
</html>
